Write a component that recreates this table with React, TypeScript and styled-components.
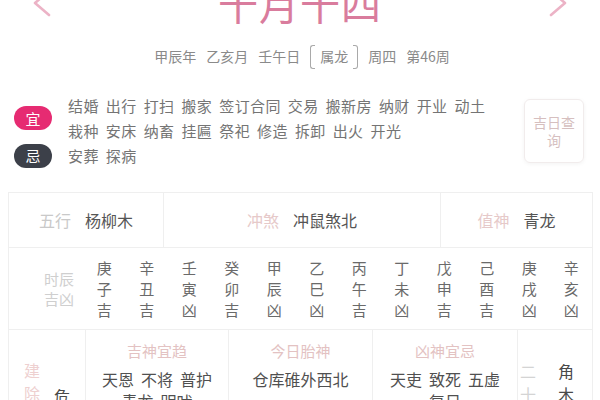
import React from "react";
import styled, { createGlobalStyle } from "styled-components";

const Global = createGlobalStyle`
  html, body { margin: 0; padding: 0; background: #fff; overflow: hidden; }
  body { font-family: "Noto Sans CJK SC", "Noto Sans", sans-serif; }
  * { box-sizing: border-box; }
`;

const Page = styled.div`
  width: 600px;
  height: 400px;
  overflow: hidden;
`;

const Top = styled.div`
  display: flex;
  justify-content: space-between;
  align-items: center;
  height: 40px;
  margin-top: -17px;
  padding: 0 32px 0 32px;
`;

const Title = styled.div`
  font-size: 40px;
  line-height: 40px;
  letter-spacing: 1px;
  color: #d97c9d;
`;

const Sub = styled.div`
  margin-top: 21px;
  height: 24px;
  display: flex;
  justify-content: center;
  align-items: center;
  gap: 10px;
  font-size: 14px;
  line-height: 24px;
  color: #8a8a8a;
  padding-left: 4px;
`;

const Zodiac = styled.span`
  position: relative;
  display: inline-block;
  padding: 0 10px;
  &::before, &::after {
    content: "";
    position: absolute;
    top: 1px;
    width: 4px;
    height: 22px;
    border: 1.5px solid #a9a9a9;
  }
  &::before { left: 0; border-right: none; border-radius: 3px 0 0 3px; }
  &::after { right: 0; border-left: none; border-radius: 0 3px 3px 0; }
`;

const YiJi = styled.div`
  display: flex;
  margin-top: 25px;
  padding: 0 16px 0 14px;
`;

const YiJiRows = styled.div`
  flex: 1;
  display: flex;
  flex-direction: column;
`;

const YiRow = styled.div`
  display: flex;
  align-items: center;
  gap: 16px;
`;

const Badge = styled.div<{ $dark?: boolean }>`
  flex: none;
  width: 38px;
  height: 24px;
  border-radius: 12px;
  background: ${(p) => (p.$dark ? "#3c4049" : "#e62b72")};
  color: #fff;
  font-size: 15px;
  display: flex;
  align-items: center;
  justify-content: center;
`;

const Items = styled.div`
  flex: 1;
  display: flex;
  flex-wrap: wrap;
  column-gap: 7px;
  font-size: 15px;
  line-height: 25px;
  letter-spacing: 0.4px;
  color: #747474;
  padding-right: 20px;
`;

const QueryBox = styled.div`
  flex: none;
  width: 60px;
  height: 64px;
  margin-top: 6px;
  border: 1px solid #f1ecec;
  border-radius: 6px;
  box-shadow: 0 1px 4px rgba(0, 0, 0, 0.05);
  display: flex;
  align-items: center;
  justify-content: center;
  text-align: center;
  font-size: 14px;
  line-height: 18px;
  color: #d6bfbf;
  padding: 0 7px;
`;

const Table = styled.div`
  margin: 24px 7px 0 8px;
  border-left: 1px solid #efefef;
  border-top: 1px solid #efefef;
`;

const Row = styled.div<{ $cols: string; $h: number }>`
  display: grid;
  grid-template-columns: ${(p) => p.$cols};
  height: ${(p) => p.$h}px;
`;

const Cell = styled.div`
  border-bottom: 1px solid #efefef;
  border-right: 1px solid #efefef;
  display: flex;
  align-items: center;
  justify-content: center;
  gap: 14px;
  font-size: 16px;
`;

const Label = styled.span<{ $pink?: boolean }>`
  color: ${(p) => (p.$pink ? "#e6c9c9" : "#c9c9c9")};
`;

const Value = styled.span`
  color: #555;
`;

const HourLabelCell = styled.div`
  border-bottom: 1px solid #efefef;
  display: flex;
  align-items: center;
  justify-content: flex-end;
  padding-right: 8px;
`;

const HourLabel = styled.div`
  width: 32px;
  font-size: 15px;
  line-height: 20px;
  color: #cfcfcf;
  text-align: center;
`;

const HourCol = styled.div<{ $last?: boolean }>`
  border-bottom: 1px solid #efefef;
  border-right: ${(p) => (p.$last ? "1px solid #efefef" : "none")};
  display: flex;
  flex-direction: column;
  align-items: center;
  justify-content: center;
  font-size: 15px;
  line-height: 21px;
  color: #6a6a6a;
`;

const InfoCell = styled.div`
  border-right: 1px solid #efefef;
  display: flex;
  flex-direction: column;
  align-items: center;
  padding: 9px 10px 0;
  text-align: center;
`;

const InfoHead = styled.div`
  font-size: 15px;
  line-height: 24px;
  color: #e3c2c2;
`;

const InfoBody = styled.div`
  margin-top: 5px;
  display: flex;
  flex-wrap: wrap;
  justify-content: center;
  column-gap: 7px;
  font-size: 16px;
  line-height: 22px;
  color: #505050;
`;

const SideCell = styled.div<{ $start?: boolean }>`
  border-right: 1px solid #efefef;
  display: flex;
  justify-content: ${(p) => (p.$start ? "flex-start" : "center")};
  gap: ${(p) => (p.$start ? 22 : 14)}px;
  padding-top: ${(p) => (p.$start ? 30 : 29)}px;
  padding-left: ${(p) => (p.$start ? 2 : 0)}px;
`;

const VText = styled.div<{ $pink?: boolean; $light?: boolean; $offset?: number }>`
  display: flex;
  flex-direction: column;
  font-size: 16px;
  line-height: 23px;
  margin-top: ${(p) => p.$offset ?? 0}px;
  color: ${(p) => (p.$pink ? "#eed0d0" : p.$light ? "#d4d4d4" : "#4a4a4a")};
`;

const Chevron = ({ dir }: { dir: "l" | "r" }) => (
  <svg width="20" height="30" viewBox="0 0 20 30">
    <polyline
      points={dir === "l" ? "17,3 3,15 17,27" : "3,3 17,15 3,27"}
      fill="none"
      stroke="#ecb3c6"
      strokeWidth="2.6"
      strokeLinecap="round"
      strokeLinejoin="round"
    />
  </svg>
);

const yi1 = ["结婚", "出行", "打扫", "搬家", "签订合同", "交易", "搬新房", "纳财", "开业", "动土", "栽种", "安床", "纳畜", "挂匾", "祭祀", "修造", "拆卸", "出火", "开光"];
const ji = ["安葬", "探病"];

const hours = [
  ["庚", "子", "吉"],
  ["辛", "丑", "吉"],
  ["壬", "寅", "凶"],
  ["癸", "卯", "吉"],
  ["甲", "辰", "凶"],
  ["乙", "巳", "凶"],
  ["丙", "午", "吉"],
  ["丁", "未", "凶"],
  ["戊", "申", "吉"],
  ["己", "酉", "吉"],
  ["庚", "戌", "凶"],
  ["辛", "亥", "凶"],
];

const Words = ({ text }: { text: string }) => (
  <InfoBody>
    {text.split(" ").map((w, i) => (
      <span key={i}>{w}</span>
    ))}
  </InfoBody>
);

export default function App() {
  return (
    <Page>
      <Global />
      <Top>
        <Chevron dir="l" />
        <Title>十月十四</Title>
        <Chevron dir="r" />
      </Top>
      <Sub>
        <span>甲辰年</span>
        <span>乙亥月</span>
        <span>壬午日</span>
        <Zodiac>属龙</Zodiac>
        <span>周四</span>
        <span>第46周</span>
      </Sub>
      <YiJi>
        <YiJiRows>
          <YiRow>
            <Badge>宜</Badge>
            <Items>
              {yi1.map((t, i) => (
                <span key={i}>{t}</span>
              ))}
            </Items>
          </YiRow>
          <YiRow>
            <Badge $dark>忌</Badge>
            <Items>
              {ji.map((t, i) => (
                <span key={i}>{t}</span>
              ))}
            </Items>
          </YiRow>
        </YiJiRows>
        <QueryBox>吉日查询</QueryBox>
      </YiJi>
      <Table>
        <Row $cols="155px 277px 1fr" $h={55}>
          <Cell>
            <Label>五行</Label>
            <Value>杨柳木</Value>
          </Cell>
          <Cell>
            <Label $pink>冲煞</Label>
            <Value>冲鼠煞北</Value>
          </Cell>
          <Cell>
            <Label $pink>值神</Label>
            <Value>青龙</Value>
          </Cell>
        </Row>
        <Row $cols="74px repeat(12, 1fr)" $h={82}>
          <HourLabelCell>
            <HourLabel>时辰吉凶</HourLabel>
          </HourLabelCell>
          {hours.map((h, i) => (
            <HourCol key={i} $last={i === hours.length - 1}>
              {h.map((c, j) => (
                <span key={j}>{c}</span>
              ))}
            </HourCol>
          ))}
        </Row>
        <Row $cols="77px 143px 144px 145px 1fr" $h={110}>
          <SideCell>
            <VText $pink>
              <span>建</span>
              <span>除</span>
            </VText>
            <VText $offset={26}>
              <span>危</span>
            </VText>
          </SideCell>
          <InfoCell>
            <InfoHead>吉神宜趋</InfoHead>
            <Words text="天恩 不将 普护 青龙 明吠" />
          </InfoCell>
          <InfoCell>
            <InfoHead>今日胎神</InfoHead>
            <Words text="仓库碓外西北" />
          </InfoCell>
          <InfoCell>
            <InfoHead>凶神宜忌</InfoHead>
            <Words text="天吏 致死 五虚 复日" />
          </InfoCell>
          <SideCell $start>
            <VText $light>
              <span>二</span>
              <span>十</span>
              <span>八</span>
              <span>宿</span>
            </VText>
            <VText>
              <span>角</span>
              <span>木</span>
              <span>蛟</span>
            </VText>
          </SideCell>
        </Row>
      </Table>
    </Page>
  );
}
